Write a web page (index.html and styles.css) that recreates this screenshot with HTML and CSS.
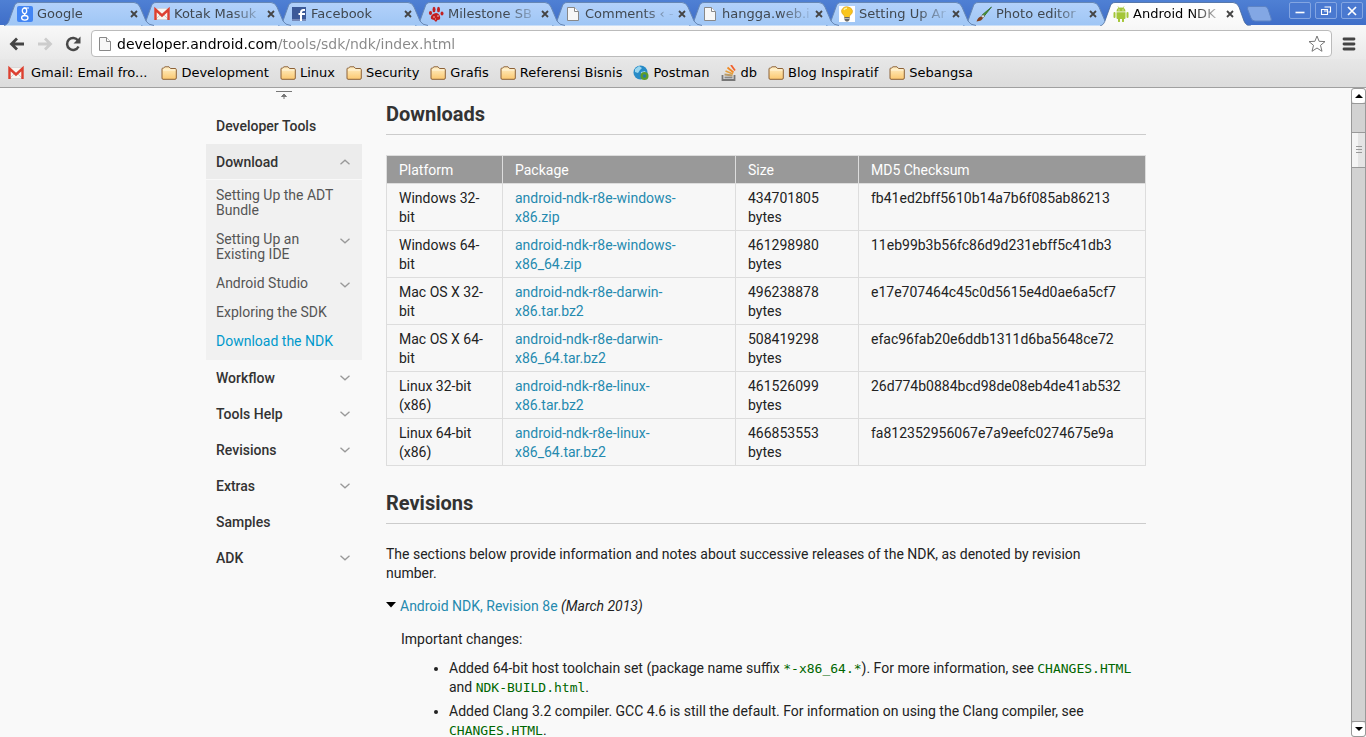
FILE: index.html
```html
<!DOCTYPE html>
<html lang="en">
<head>
<meta charset="utf-8">
<title>Android NDK | Android Developers</title>
<link rel="stylesheet" href="styles.css">
</head>
<body>
<svg class="defs" aria-hidden="true">
  <defs>
    <linearGradient id="tab-fill" x1="0" y1="0" x2="0" y2="1"><stop offset="0" stop-color="#b3d1fa"/><stop offset="1" stop-color="#9fc6f5"/></linearGradient>
    <linearGradient id="tab-on" x1="0" y1="0" x2="0" y2="1"><stop offset="0" stop-color="#fff"/><stop offset="1" stop-color="#f8f8f8"/></linearGradient>
    <linearGradient id="folder-fill" x1="0" y1="0" x2="0" y2="1"><stop offset="0" stop-color="#fff0c8"/><stop offset="1" stop-color="#fbc870"/></linearGradient>
    <symbol id="tab-shape" viewBox="0 0 151 24"><path d="M0 23.5C4 23 5 19 6 16L10 5Q11 .5 15 .5H130Q134 .5 136 5L142 19Q144 23 150 23.5" fill="url(#tab-fill)" stroke="#6687b5"/></symbol>
    <symbol id="tab-shape-on" viewBox="0 0 151 24"><path d="M0 24C4 23 5 19 6 16L10 5Q11 .5 15 .5H133Q137 .5 139 5L144 19Q146 24 151 24" fill="url(#tab-on)" stroke="#446699" stroke-width=".8"/></symbol>
    <symbol id="cross" viewBox="0 0 8 8"><path d="M1 1l6 6M7 1L1 7" stroke="#444" stroke-width="1.8"/></symbol>
    <symbol id="page" viewBox="0 0 16 16"><path d="M2.5 1.5h7l4 4v9h-11z" fill="#f7f7f7" stroke="#888"/><path d="M9.500 1.500v4h4" fill="#fff" stroke="#888"/></symbol>
    <symbol id="folder" viewBox="0 0 16 14"><path d="M1 12V3q0-1 1-1h.5L4 .8h4L9.500 2.500H14q1.300 0 1.300 1.300V12q0 1.300-1.300 1.300H2Q1 13.300 1 12z" fill="url(#folder-fill)" stroke="#8d6238"/><path d="M2 4h12.500" stroke="#fff6dd"/></symbol>
    <symbol id="mail" viewBox="0 0 16 12"><path d="M1 .5h14v11H1z" fill="#f8f5f0" stroke="#ccc" stroke-width=".6"/><path d="M2 11l4.500-4.500M14 11L9.500 6.500" stroke="#ccc"/><path d="M1.500 12V1.500L8 7.500l6.500-6V12" fill="none" stroke="#dd4030" stroke-width="2.400"/></symbol>
    <symbol id="down" viewBox="0 0 10 6"><path d="M.5 .8L5 4.800 9.500 .8" fill="none" stroke="#999" stroke-width="1.300"/></symbol>
  </defs>
</svg>

<header class="chrome">
  <div class="titlebar">
    <nav class="tabs" aria-label="Open tabs">
      <div class="tab layer-8"><svg class="shape"><use href="#tab-shape"/></svg>
        <svg class="icon" viewBox="0 0 16 16"><rect width="16" height="16" rx="2" fill="#4285f4"/><ellipse cx="7.500" cy="4.800" rx="2.200" ry="2.800" fill="none" stroke="#fff" stroke-width="1.300"/><path d="M7 2h5M9 7.500Q6.500 8 8 9.300" fill="none" stroke="#fff" stroke-width="1.200"/><ellipse cx="7.800" cy="11.800" rx="3.200" ry="2.300" fill="none" stroke="#fff" stroke-width="1.300"/></svg>
        <span class="title">Google</span><button class="close" aria-label="Close tab"><svg><use href="#cross"/></svg></button></div>
      <div class="tab layer-7"><svg class="shape"><use href="#tab-shape"/></svg><svg class="icon"><use href="#mail"/></svg><span class="title">Kotak Masuk</span><button class="close" aria-label="Close tab"><svg><use href="#cross"/></svg></button></div>
      <div class="tab layer-6"><svg class="shape"><use href="#tab-shape"/></svg>
        <svg class="icon" viewBox="0 0 16 16"><path d="M1 1h14v14H1z" fill="#3b5998"/><path d="M1 13h14v2H1z" fill="#7589b8"/><path d="M10 15V6.500Q10 4 12.500 4H14M7.500 8H14" fill="none" stroke="#fff" stroke-width="2"/></svg>
        <span class="title">Facebook</span><button class="close" aria-label="Close tab"><svg><use href="#cross"/></svg></button></div>
      <div class="tab layer-5"><svg class="shape"><use href="#tab-shape"/></svg>
        <svg class="icon" viewBox="0 0 16 16" fill="#c22020"><path d="M8 7q3 0 4 3.500T9.500 14L8 16l-2-2q-4-.5-3-3.500T8 7z"/><ellipse cx="6" cy="3.500" rx="1.500" ry="2.700"/><ellipse cx="10.500" cy="3.500" rx="1.500" ry="2.700"/><ellipse cx="2.500" cy="7" rx="1.600" ry="2"/><ellipse cx="14" cy="7.500" rx="1.500" ry="2"/><path d="M5 11h2M9 10h2M7 13h1" stroke="#f2b0b0"/></svg>
        <span class="title">Milestone SB</span><button class="close" aria-label="Close tab"><svg><use href="#cross"/></svg></button></div>
      <div class="tab layer-4"><svg class="shape"><use href="#tab-shape"/></svg><svg class="icon"><use href="#page"/></svg><span class="title">Comments ‹ -</span><button class="close" aria-label="Close tab"><svg><use href="#cross"/></svg></button></div>
      <div class="tab layer-3"><svg class="shape"><use href="#tab-shape"/></svg><svg class="icon"><use href="#page"/></svg><span class="title">hangga.web.i</span><button class="close" aria-label="Close tab"><svg><use href="#cross"/></svg></button></div>
      <div class="tab layer-2"><svg class="shape"><use href="#tab-shape"/></svg>
        <svg class="icon" viewBox="0 0 16 16"><path d="M0 0h16v16H0z" fill="#fff"/><path d="M5.500 10Q2 7 2.500 4.500 4 .5 8 .7q4.500.3 5.500 4Q14 7 10.500 10v1.500h-5z" fill="#f9c51d" stroke="#d99a16" stroke-width=".6"/><path d="M5 4q1-2 3-1.700" fill="none" stroke="#fff3a0" stroke-width="1.500"/><path d="M5.500 11h5v3l-1.500 1.500H7L5.500 14z" fill="#666"/><path d="M5.500 12.500h5" stroke="#bbb"/></svg>
        <span class="title">Setting Up Ar</span><button class="close" aria-label="Close tab"><svg><use href="#cross"/></svg></button></div>
      <div class="tab layer-1"><svg class="shape"><use href="#tab-shape"/></svg>
        <svg class="icon" viewBox="0 0 16 16"><path d="M15.500 1L6 9l1.500 2z" fill="#4f9a35" stroke="#245c18" stroke-width=".7"/><path d="M7 8.500l1.800 1.700L7 12 5 10.500z" fill="#ddd" stroke="#555" stroke-width=".5"/><path d="M5 10.500L7 12q-1 3-6.500 3.500Q2 11 5 10.500z" fill="#81401e"/></svg>
        <span class="title">Photo editor</span><button class="close" aria-label="Close tab"><svg><use href="#cross"/></svg></button></div>
      <div class="tab layer-9 active"><svg class="shape"><use href="#tab-shape-on"/></svg>
        <svg class="icon" viewBox="0 0 16 16" fill="#a4c639"><path d="M3.500 5.500Q3.500 1.500 8 1.500t4.500 4zM3.500 6.200h9V12q0 1-1 1h-7q-1 0-1-1z"/><path d="M1.500 7v4M14.500 7v4M6 12v3.200M10 12v3.200" stroke="#a4c639" stroke-width="2" stroke-linecap="round"/><path d="M5 .5l1 1.500M11 .5L10 2" stroke="#a4c639" stroke-width=".8"/><path d="M5.500 3.500h1v1h-1zM9.500 3.500h1v1h-1z" fill="#fff"/></svg>
        <span class="title">Android NDK</span><button class="close" aria-label="Close tab"><svg><use href="#cross"/></svg></button></div>
    </nav>
    <button class="new-tab" aria-label="New tab"><svg viewBox="0 0 26 16"><path d="M3 .5h16q2 0 3 2.500l3 9q1 3-1 3H9q-3 0-4-3L1.500 3Q1 .5 3 .5z" fill="#83a7e4" stroke="#5d83c4"/></svg></button>
    <div class="window-buttons">
      <button aria-label="Minimize"><svg viewBox="0 0 12 10"><path d="M1.500 6.500h9" stroke="#fff" stroke-width="1.600"/></svg></button>
      <button aria-label="Restore"><svg viewBox="0 0 12 10"><path d="M4.500 1h6v5h-2M1.500 3.500h6v5h-6zM4 5h4" fill="none" stroke="#fff" stroke-width="1.100"/></svg></button>
      <button aria-label="Close window"><svg viewBox="0 0 12 10"><path d="M2 1l8 8M10 1L2 9" stroke="#fff" stroke-width="1.700"/></svg></button>
    </div>
  </div>
  <div class="toolbar">
    <button class="tool" aria-label="Back"><svg viewBox="0 0 16 16"><path d="M15 8H3M8 2.500L2.500 8 8 13.500" fill="none" stroke="#444" stroke-width="2.800"/></svg></button>
    <button class="tool" aria-label="Forward" disabled><svg viewBox="0 0 16 16"><path d="M1 8h12M8 2.500L13.500 8 8 13.500" fill="none" stroke="#ccc" stroke-width="2.800"/></svg></button>
    <button class="tool" aria-label="Reload"><svg viewBox="0 0 16 16"><path d="M13 4.500A6 6 0 1 0 13.500 10.500" fill="none" stroke="#484848" stroke-width="2.500"/><path d="M15.500 .5v7h-7z" fill="#484848"/></svg></button>
    <div class="omnibox">
      <svg class="icon"><use href="#page"/></svg>
      <input type="text" aria-label="Address" value="developer.android.com/tools/sdk/ndk/index.html">
      <button class="star" aria-label="Bookmark this page"><svg viewBox="0 0 18 18"><path d="M9 1l2.100 5.300 5.900.3-4.500 3.700 1.500 6L9 13l-5 3.300 1.500-6L1 6.600l5.900-.3z" fill="#fff" stroke="#777" stroke-linejoin="round"/></svg></button>
    </div>
    <button class="menu" aria-label="Menu"><svg viewBox="0 0 14 14"><path d="M2 2h10M2 7h10M2 12h10" stroke="#444" stroke-width="2.800" stroke-linecap="round"/></svg></button>
  </div>
  <nav class="bookmarks" aria-label="Bookmarks">
    <a class="first" href="#"><svg class="icon"><use href="#mail"/></svg>Gmail: Email fro...</a>
    <a href="#"><svg class="icon"><use href="#folder"/></svg>Development</a>
    <a href="#"><svg class="icon"><use href="#folder"/></svg>Linux</a>
    <a href="#"><svg class="icon"><use href="#folder"/></svg>Security</a>
    <a href="#"><svg class="icon"><use href="#folder"/></svg>Grafis</a>
    <a href="#"><svg class="icon"><use href="#folder"/></svg>Referensi Bisnis</a>
    <a href="#"><svg class="icon" viewBox="0 0 16 16"><circle cx="7.500" cy="7.500" r="7" fill="#278bc7"/><path d="M2 4l4-3 3 2-2 2-2 3-3-1zM8 7l4-1 1 2-3 4-2-2z" fill="#9bd6ee"/><circle cx="11.500" cy="11" r="4" fill="#5a9c2b"/><circle cx="11.500" cy="11" r="1.700" fill="#2878a8"/></svg>Postman</a>
    <a href="#"><svg class="icon" viewBox="0 0 16 16" fill="none" stroke-width="1.800"><path d="M1.500 10v5h12v-5" stroke="#777"/><path d="M3.500 12.500h8" stroke="#888"/><path d="M3.500 9.500l8 1" stroke="#b99a67"/><path d="M4.500 6l7.500 3" stroke="#e5a03b"/><path d="M6.500 2.500l6 5" stroke="#f08a24"/><path d="M10 0l4 5.500" stroke="#f2602c"/></svg>db</a>
    <a href="#"><svg class="icon"><use href="#folder"/></svg>Blog Inspiratif</a>
    <a href="#"><svg class="icon"><use href="#folder"/></svg>Sebangsa</a>
  </nav>
</header>

<div class="viewport">
  <div class="document">
    <div class="columns">
      <nav class="sidebar" aria-label="Developer Tools">
        <button class="collapse" aria-label="Collapse header"><svg viewBox="0 0 16 10"><path d="M0 1.500h16M8 9V4M5.500 6.500h5L8 4z" fill="#777" stroke="#777"/></svg></button>
        <ul class="sections">
          <li><a href="#">Developer Tools</a></li>
          <li class="open"><a href="#">Download<svg class="flip"><use href="#down"/></svg></a>
            <ul class="pages">
              <li><a href="#"><span>Setting Up the ADT Bundle</span></a></li>
              <li><a href="#"><span>Setting Up an Existing IDE</span><svg><use href="#down"/></svg></a></li>
              <li><a href="#"><span>Android Studio</span><svg><use href="#down"/></svg></a></li>
              <li><a href="#"><span>Exploring the SDK</span></a></li>
              <li><a class="current" href="#"><span>Download the NDK</span></a></li>
            </ul>
          </li>
          <li><a href="#">Workflow<svg><use href="#down"/></svg></a></li>
          <li><a href="#">Tools Help<svg><use href="#down"/></svg></a></li>
          <li><a href="#">Revisions<svg><use href="#down"/></svg></a></li>
          <li><a href="#">Extras<svg><use href="#down"/></svg></a></li>
          <li><a href="#">Samples</a></li>
          <li><a href="#">ADK<svg><use href="#down"/></svg></a></li>
        </ul>
      </nav>
      <main class="content">
        <h2>Downloads</h2>
        <table>
          <colgroup><col class="platform"><col class="package"><col class="size"><col></colgroup>
          <thead><tr><th>Platform</th><th>Package</th><th>Size</th><th>MD5 Checksum</th></tr></thead>
          <tbody>
            <tr><td>Windows 32-bit</td><td class="file"><a href="#">android-ndk-r8e-windows-x86.zip</a></td><td>434701805 bytes</td><td>fb41ed2bff5610b14a7b6f085ab86213</td></tr>
            <tr><td>Windows 64-bit</td><td class="file"><a href="#">android-ndk-r8e-windows-x86_64.zip</a></td><td>461298980 bytes</td><td>11eb99b3b56fc86d9d231ebff5c41db3</td></tr>
            <tr><td>Mac OS X 32-bit</td><td class="file"><a href="#">android-ndk-r8e-darwin-x86.tar.bz2</a></td><td>496238878 bytes</td><td>e17e707464c45c0d5615e4d0ae6a5cf7</td></tr>
            <tr><td>Mac OS X 64-bit</td><td class="file"><a href="#">android-ndk-r8e-darwin-x86_64.tar.bz2</a></td><td>508419298 bytes</td><td>efac96fab20e6ddb1311d6ba5648ce72</td></tr>
            <tr><td>Linux 32-bit (x86)</td><td class="file"><a href="#">android-ndk-r8e-linux-x86.tar.bz2</a></td><td>461526099 bytes</td><td>26d774b0884bcd98de08eb4de41ab532</td></tr>
            <tr><td>Linux 64-bit (x86)</td><td class="file"><a href="#">android-ndk-r8e-linux-x86_64.tar.bz2</a></td><td>466853553 bytes</td><td>fa812352956067e7a9eefc0274675e9a</td></tr>
          </tbody>
        </table>
        <h2>Revisions</h2>
        <p class="intro">The sections below provide information and notes about successive releases of the NDK, as denoted by revision number.</p>
        <p class="revision"><svg viewBox="0 0 10 6"><path d="M0 0h10L5 5.500z"/></svg><span><a href="#">Android NDK, Revision 8e</a> <em>(March 2013)</em></span></p>
        <div class="notes">
          <p>Important changes:</p>
          <ul>
            <li>Added 64-bit host toolchain set (package name suffix <code>*-x86_64.*</code>). For more information, see <code>CHANGES.HTML</code> and <code>NDK-BUILD.html</code>.</li>
            <li>Added Clang 3.2 compiler. GCC 4.6 is still the default. For information on using the Clang compiler, see <code>CHANGES.HTML</code>.</li>
          </ul>
        </div>
      </main>
    </div>
  </div>
  <div class="scrollbar">
    <button aria-label="Scroll up"><svg viewBox="0 0 8 4"><path d="M0 4h8L4 0z"/></svg></button>
    <div class="track"><div class="thumb"><svg viewBox="0 0 6 8"><path d="M0 .5h6M0 3.500h6M0 6.500h6" stroke="#999"/></svg></div></div>
    <button aria-label="Scroll down"><svg viewBox="0 0 8 4"><path d="M0 0h8L4 4z"/></svg></button>
  </div>
</div>
</body>
</html>
```
FILE: styles.css
```css
* { box-sizing: border-box; }
body { margin: 0; height: 100vh; display: flex; flex-direction: column; overflow: hidden; background: #f9f9f9; color: #222; font: 14px/19px Roboto, sans-serif; }
button { border: 0; padding: 0; background: none; display: flex; align-items: center; justify-content: center; }
a { text-decoration: none; color: #258aaf; }
ul { list-style: none; margin: 0; padding: 0; }
svg { display: block; flex: none; }
.defs { position: absolute; width: 0; height: 0; }
.icon { width: 16px; height: 16px; }

/* Browser frame */
.chrome { flex: none; font: 13px/16px "DejaVu Sans", sans-serif; color: #000; }
.titlebar { display: flex; height: 26px; padding: 2px 3px 0 4px; background: linear-gradient(#4f80d4, #3f6ec8); border-bottom: 1px solid #f4f6fa; }
.tabs { display: flex; }
.tab { position: relative; display: flex; align-items: center; width: 151px; margin-right: -14px; padding: 1px 17px 0 13px; color: #404850; }
.tab .icon { position: relative; margin-right: 4px; }
.shape { position: absolute; inset: 0; width: 151px; height: 24px; }
.title { position: relative; flex: 1; white-space: nowrap; mask-image: linear-gradient(to right, #000 65%, rgba(0, 0, 0, .15) 98%); }
.close { position: relative; width: 8px; height: 8px; margin-left: 4px; }
.close svg { width: 8px; height: 8px; }
.active { color: #000; }
.layer-9 { z-index: 9; }
.layer-8 { z-index: 8; }
.layer-7 { z-index: 7; }
.layer-6 { z-index: 6; }
.layer-5 { z-index: 5; }
.layer-4 { z-index: 4; }
.layer-3 { z-index: 3; }
.layer-2 { z-index: 2; }
.layer-1 { z-index: 1; }
.new-tab { margin: 4px 0 0 9px; align-self: flex-start; }
.new-tab svg { width: 26px; height: 16px; }
.window-buttons { display: flex; gap: 4px; margin-left: auto; }
.window-buttons button { width: 22px; height: 17px; border: 1px solid #83a5e2; border-radius: 2px; background: #4a79d0; }
.window-buttons svg { width: 12px; height: 10px; }
.toolbar { display: flex; align-items: center; height: 33px; padding: 2px 10px 0 9px; background: linear-gradient(#f8f8f8, #e9e9e9); }
.tool { width: 16px; height: 16px; margin-right: 12px; }
.tool svg { width: 16px; height: 16px; }
.omnibox { flex: 1; display: flex; align-items: center; height: 27px; margin-left: -2px; padding: 0 5px; background: #fff; border: 1px solid #bbb; border-radius: 4px; }
.omnibox input { flex: 1; min-width: 0; border: 0; padding: 0 0 0 4px; outline: 0; font: 14px/20px "DejaVu Sans", sans-serif; color: transparent; background: linear-gradient(to right, #000 165px, #888 165px) text; }
.star svg { width: 18px; height: 18px; }
.menu { margin-left: 10px; }
.menu svg { width: 14px; height: 14px; }
.bookmarks { display: flex; align-items: center; gap: 11px; height: 29px; padding: 0 8px 1px; background: linear-gradient(#e7e7e7, #dcdcdc); border-bottom: 1px solid #a0a0a0; }
.bookmarks a { display: flex; align-items: center; gap: 4px; color: #000; white-space: nowrap; }
.bookmarks .first { gap: 7px; margin-right: 3px; }

/* Page area */
.viewport { flex: 1; min-height: 0; display: flex; }
.document { flex: 1; padding-left: 1px; overflow: hidden; }
.columns { display: flex; gap: 24px; max-width: 940px; margin: 0 auto; }
.sidebar { flex: none; width: 156px; }
.collapse { width: 100%; height: 20px; padding-top: 2px; align-items: flex-start; }
.collapse svg { width: 16px; height: 10px; }
.sections > li > a { display: flex; align-items: center; justify-content: space-between; height: 36px; padding: 0 12px 0 10px; color: #333; font-weight: 500; }
.sidebar a svg { width: 10px; height: 6px; }
.sidebar .flip { transform: rotate(180deg); }
.sections > .open > a { padding-top: 1px; background: #ececec; border-bottom: 1px solid #f9f9f9; }
.pages { padding: 1px 0 4px; background: #f1f1f1; }
.pages a { display: flex; justify-content: space-between; padding: 7px 12px 7px 10px; line-height: 15px; color: #555; }
.pages a svg { margin-top: 6px; }
.pages a.current { color: #09c; }
.content { flex: 1; min-width: 0; padding-top: 14px; }
h2 { margin: 0 0 20px; padding-bottom: 8px; border-bottom: 1px solid #ccc; font-size: 20px; line-height: 24px; font-weight: 700; color: #333; }
table { width: 100%; margin-bottom: 25px; border-collapse: collapse; table-layout: fixed; background: #f7f7f7; }
.platform { width: 116px; }
.package { width: 233px; }
.size { width: 123px; }
th, td { padding: 5px 12px 3px; border: 1px solid #ddd; text-align: left; vertical-align: top; }
.file { padding-right: 32px; }
th { background: #999; color: #fff; font-weight: 400; }
p { margin: 0 0 14px; }
.intro { padding: 1px 20px 0 0; }
.revision { display: flex; gap: 4px; }
.revision svg { width: 10px; height: 6px; margin-top: 5px; }
.notes { padding-left: 15px; }
.notes p { margin-bottom: 10px; }
.notes ul { padding-left: 48px; list-style: disc; }
.notes li { margin-bottom: 5px; }
code { font: 13px/15px "DejaVu Sans Mono", monospace; color: #060; }

/* Scroll bar */
.scrollbar { display: flex; flex-direction: column; flex: none; width: 15px; border: 1px solid #999; border-radius: 3px; background: #d2d2d2; }
.scrollbar button { height: 14px; background: #fff; border-radius: 3px; }
.scrollbar button svg { width: 8px; height: 4px; }
.track { flex: 1; padding-top: 28px; border: solid #999; border-width: 1px 0; }
.thumb { height: 36px; display: flex; align-items: center; justify-content: center; border: solid #999; border-width: 1px 0; background: linear-gradient(to right, #f4f4f4 50%, #e4e4e4 50%); }
.thumb svg { width: 6px; height: 8px; }
```
